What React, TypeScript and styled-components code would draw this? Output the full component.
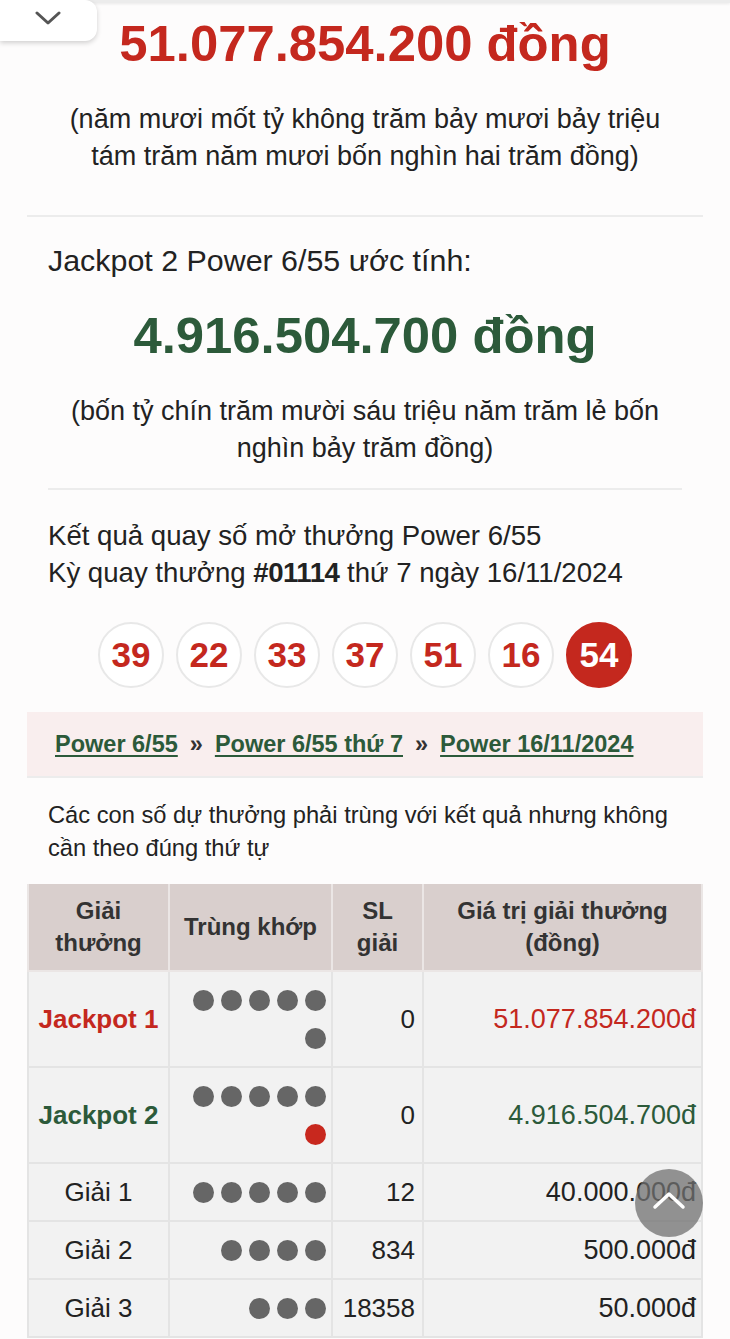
import React from 'react';
import styled, { createGlobalStyle } from 'styled-components';

const RED = '#c4281e';
const GREEN = '#2c5a3a';

const GlobalStyle = createGlobalStyle`
  html, body {
    margin: 0;
    padding: 0;
    background: #fdfcfc;
  }
  body {
    font-family: "Liberation Sans", Arial, Helvetica, sans-serif;
    color: #222;
  }
  * {
    box-sizing: border-box;
  }
`;

type Prize = {
  name: string;
  tone?: 'red' | 'green';
  dots: number;
  redLast?: boolean;
  count: string;
  value: string;
};

const prizes: Prize[] = [
  { name: 'Jackpot 1', tone: 'red', dots: 6, count: '0', value: '51.077.854.200đ' },
  { name: 'Jackpot 2', tone: 'green', dots: 6, redLast: true, count: '0', value: '4.916.504.700đ' },
  { name: 'Giải 1', dots: 5, count: '12', value: '40.000.000đ' },
  { name: 'Giải 2', dots: 4, count: '834', value: '500.000đ' },
  { name: 'Giải 3', dots: 3, count: '18358', value: '50.000đ' },
];

const balls = ['39', '22', '33', '37', '51', '16', '54'];

export default function App() {
  return (
    <>
      <GlobalStyle />
      <TopShade />
      <MenuTab>
        <svg width="26" height="14" viewBox="0 0 26 14">
          <path d="M2 2 L13 12 L24 2" fill="none" stroke="#555" strokeWidth="3" strokeLinecap="round" strokeLinejoin="round" />
        </svg>
      </MenuTab>

      <Page>
        <BigAmount $tone="red">51.077.854.200 đồng</BigAmount>
        <AmountWords>
          (năm mươi mốt tỷ không trăm bảy mươi bảy triệu
          <br />
          tám trăm năm mươi bốn nghìn hai trăm đồng)
        </AmountWords>

        <Divider />

        <Inner>
          <JackpotLabel>Jackpot 2 Power 6/55 ước tính:</JackpotLabel>
          <BigAmount $tone="green">4.916.504.700 đồng</BigAmount>
          <AmountWords>
            (bốn tỷ chín trăm mười sáu triệu năm trăm lẻ bốn
            <br />
            nghìn bảy trăm đồng)
          </AmountWords>
          <InnerDivider />
          <DrawInfo>
            Kết quả quay số mở thưởng Power 6/55
            <br />
            Kỳ quay thưởng <b>#01114</b> thứ 7 ngày 16/11/2024
          </DrawInfo>
        </Inner>

        <BallRow>
          {balls.map((b, i) => (
            <Ball key={b} $power={i === balls.length - 1}>
              {b}
            </Ball>
          ))}
        </BallRow>

        <Crumbs>
          <CrumbLink href="#">Power 6/55</CrumbLink>
          <CrumbSep>»</CrumbSep>
          <CrumbLink href="#">Power 6/55 thứ 7</CrumbLink>
          <CrumbSep>»</CrumbSep>
          <CrumbLink href="#">Power 16/11/2024</CrumbLink>
        </Crumbs>

        <Note>Các con số dự thưởng phải trùng với kết quả nhưng không cần theo đúng thứ tự</Note>

        <PrizeTable>
          <colgroup>
            <col style={{ width: 141 }} />
            <col style={{ width: 163 }} />
            <col style={{ width: 91 }} />
            <col />
          </colgroup>
          <thead>
            <tr>
              <Th>Giải thưởng</Th>
              <Th>Trùng khớp</Th>
              <Th>SL giải</Th>
              <Th>Giá trị giải thưởng (đồng)</Th>
            </tr>
          </thead>
          <tbody>
            {prizes.map(p => (
              <tr key={p.name}>
                <NameCell $tone={p.tone}>{p.name}</NameCell>
                <DotCell>
                  {Array.from({ length: p.dots }).map((_, i) => (
                    <Dot key={i} $red={!!p.redLast && i === p.dots - 1} />
                  ))}
                </DotCell>
                <NumCell>{p.count}</NumCell>
                <ValueCell $tone={p.tone}>{p.value}</ValueCell>
              </tr>
            ))}
          </tbody>
        </PrizeTable>
      </Page>

      <ToTop>
        <svg width="34" height="20" viewBox="0 0 34 20">
          <path d="M3 17 L17 4 L31 17" fill="none" stroke="#fff" strokeWidth="3.5" strokeLinecap="round" strokeLinejoin="round" />
        </svg>
      </ToTop>
    </>
  );
}

const TopShade = styled.div`
  position: fixed;
  top: 0;
  left: 0;
  right: 0;
  height: 3px;
  background: #ececec;
  box-shadow: 0 1px 3px rgba(0, 0, 0, 0.08);
  z-index: 5;
`;

const MenuTab = styled.div`
  position: fixed;
  top: 0;
  left: 0;
  width: 97px;
  height: 41px;
  background: #fff;
  border-radius: 0 12px 12px 0;
  box-shadow: 0 2px 5px rgba(0, 0, 0, 0.18);
  display: flex;
  align-items: flex-start;
  justify-content: center;
  padding-top: 11px;
  padding-right: 2px;
  z-index: 6;
`;

const Page = styled.main`
  padding: 14px 27px 40px;
`;

const BigAmount = styled.div<{ $tone: 'red' | 'green' }>`
  font-size: 50.8px;
  line-height: 60px;
  font-weight: 700;
  text-align: center;
  color: ${p => (p.$tone === 'red' ? RED : GREEN)};
`;

const AmountWords = styled.p`
  margin: 27px 0 0;
  font-size: 27px;
  line-height: 37px;
  text-align: center;
  color: #222;
`;

const Divider = styled.hr`
  margin: 40px 0 0;
  border: none;
  border-top: 2px solid #ececec;
`;

const Inner = styled.section`
  padding: 0 21px;
`;

const JackpotLabel = styled.p`
  margin: 25px 0 27px;
  font-size: 30.4px;
  line-height: 37px;
`;

const InnerDivider = styled.hr`
  margin: 21px 0 0;
  border: none;
  border-top: 2px solid #ececec;
`;

const DrawInfo = styled.p`
  margin: 27px 0 0;
  font-size: 27.6px;
  line-height: 37px;

  b {
    font-weight: 700;
    letter-spacing: -0.5px;
  }
`;

const BallRow = styled.div`
  margin-top: 31px;
  display: flex;
  justify-content: center;
  gap: 12px;
`;

const Ball = styled.div<{ $power: boolean }>`
  width: 66px;
  height: 66px;
  border-radius: 50%;
  display: flex;
  align-items: center;
  justify-content: center;
  font-size: 35px;
  font-weight: 700;
  color: ${p => (p.$power ? '#fff' : RED)};
  background: ${p => (p.$power ? RED : '#fff')};
  border: 2px solid ${p => (p.$power ? RED : '#e8e8e8')};
`;

const Crumbs = styled.nav`
  margin-top: 24px;
  height: 66px;
  padding: 0 28px;
  background: #f9eeee;
  border-bottom: 2px solid #ececec;
  display: flex;
  align-items: center;
  gap: 12px;
  font-size: 23.5px;
  font-weight: 700;
`;

const CrumbLink = styled.a`
  color: ${GREEN};
  text-decoration: underline;
  text-underline-offset: 3px;
  text-decoration-thickness: 2px;
`;

const CrumbSep = styled.span`
  color: #333;
`;

const Note = styled.p`
  margin: 21px 21px 0;
  font-size: 23.7px;
  line-height: 33px;
`;

const PrizeTable = styled.table`
  margin-top: 19px;
  width: 100%;
  table-layout: fixed;
  border-collapse: collapse;
  font-size: 26px;
`;

const Th = styled.th`
  background: #d9cfcd;
  border: 2px solid #ebe6e5;
  border-top: none;
  padding: 11px 8px;
  font-size: 24px;
  line-height: 32px;
  font-weight: 700;
  color: #333;
  text-align: center;
  vertical-align: middle;
`;

const Td = styled.td`
  background: #f2f2f2;
  border: 2px solid #e4e4e4;
  padding: 9px 7px;
  line-height: 38px;
  vertical-align: middle;
`;

const NameCell = styled(Td)<{ $tone?: 'red' | 'green' }>`
  text-align: center;
  font-weight: ${p => (p.$tone ? 700 : 400)};
  color: ${p => (p.$tone === 'red' ? RED : p.$tone === 'green' ? GREEN : '#222')};
`;

const DotCell = styled(Td)`
  text-align: right;
  padding-right: 5px;
  font-size: 0;
`;

const Dot = styled.span<{ $red: boolean }>`
  display: inline-block;
  width: 21px;
  height: 21px;
  margin-left: 7px;
  border-radius: 50%;
  vertical-align: middle;
  background: ${p => (p.$red ? '#c8281e' : '#666')};
`;

const NumCell = styled(Td)`
  text-align: right;
  color: #222;
`;

const ValueCell = styled(Td)<{ $tone?: 'red' | 'green' }>`
  text-align: right;
  font-size: 27px;
  padding-right: 5px;
  color: ${p => (p.$tone === 'red' ? RED : p.$tone === 'green' ? GREEN : '#222')};
`;

const ToTop = styled.div`
  position: fixed;
  right: 27px;
  bottom: 102px;
  width: 68px;
  height: 68px;
  border-radius: 50%;
  background: rgba(112, 112, 112, 0.75);
  display: flex;
  align-items: center;
  justify-content: center;
  padding-bottom: 6px;
  z-index: 4;
`;
